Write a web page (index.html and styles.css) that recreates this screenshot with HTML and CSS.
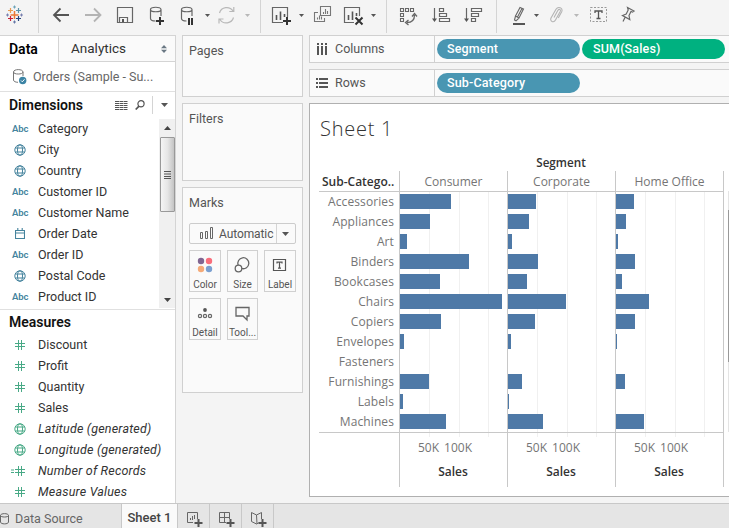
FILE: index.html
```html
<!DOCTYPE html>
<html lang="en">
<head>
<meta charset="utf-8">
<title>Workbook</title>
<link rel="stylesheet" href="styles.css">
</head>
<body>
<svg class="defs" width="0" height="0" aria-hidden="true">
  <symbol id="globe" viewBox="0 0 12 12"><g fill="none" stroke="currentColor" stroke-width="1"><circle cx="6" cy="6" r="5.2"/><ellipse cx="6" cy="6" rx="2.5" ry="5.2"/><path d="M1.3 4h9.4M1.3 8h9.4"/></g></symbol>
  <symbol id="hash" viewBox="0 0 10 10"><path d="M3.5 0v10M6.5 0v10M0 3.5h10M0 6.5h10" fill="none" stroke="currentColor" stroke-width="1"/></symbol>
  <symbol id="calendar" viewBox="0 0 10 11"><path d="M.5 2.5h9v8h-9zM.5 5h9M2.8 0v3M7.2 0v3" fill="none" stroke="currentColor" stroke-width="1.1"/></symbol>
</svg>

<header class="toolbar">
  <svg width="38" height="34" viewBox="0 0 38 34" fill="none">
    <path d="M14.5 11v8M10.5 15h8" stroke="#eb7a35" stroke-width="1.5"/>
    <path d="M10.5 8v5M8 10.5h5" stroke="#e89b51" stroke-width="1.2"/>
    <path d="M18.5 8v5M16 10.5h5" stroke="#5b93a8" stroke-width="1.2"/>
    <path d="M10.5 16v5M8 18.5h5" stroke="#c92035" stroke-width="1.2"/>
    <path d="M18.5 16v5M16 18.5h5" stroke="#26457d" stroke-width="1.2"/>
    <path d="M14.500 5.500v3M13 7h3" stroke="#6fa4b8"/>
    <path d="M14.500 20.500v3M13 22h3" stroke="#6678a8"/>
    <path d="M7.500 13.500v3M6 15h3M21.500 13.500v3M20 15h3" stroke="#7880b0"/>
  </svg>
  <i class="rule"></i>
  <svg width="71" height="34" viewBox="39 0 71 34" fill="none" stroke-width="1.8">
    <path d="M69 15H54M60.5 8.5L54 15l6.500 6.500" stroke="#555"/>
    <path d="M85 15h15M94 8.500l6.500 6.500-6.500 6.500" stroke="#b4b4b4"/>
  </svg>
  <svg width="30" height="34" viewBox="110 0 30 34" fill="none" stroke="#666">
    <path d="M117.500 7.500h15v15h-15zM119.500 22.500v-5h8v5" stroke-width="1.200"/><path d="M122 19h2v3h-2z" fill="#555" stroke="none"/>
  </svg>
  <svg width="32" height="34" viewBox="140 0 32 34" fill="none">
    <path d="M161 16V9.500c0-3-10.500-3-10.500 0v9c0 1.500 2 2.500 5 2.500M150.500 9.500c0 3 10.500 3 10.500 0" stroke="#666" stroke-width="1.200"/>
    <path d="M160 17v8M156 21h8" stroke="#333" stroke-width="2"/>
  </svg>
  <svg width="40" height="34" viewBox="172 0 40 34" fill="none">
    <path d="M192 16V9.500c0-3-10.500-3-10.500 0v9c0 1.500 2 2.500 5 2.500M181.500 9.500c0 3 10.500 3 10.500 0" stroke="#666" stroke-width="1.200"/>
    <path d="M189 18v7M192 18v7" stroke="#333" stroke-width="2"/>
    <path d="M205 14h5l-2.500 3z" fill="#555"/>
  </svg>
  <svg width="48" height="34" viewBox="212 0 48 34" fill="none" stroke="#b8b8b8" stroke-width="1.200">
    <path d="M219.500 13a7.500 7.500 0 0 1 13.500-2M233.500 17.500a7.500 7.500 0 0 1-13.500 2M233.800 7v4.500h-4.500M219 23.500V19h4.500"/>
    <path d="M245 14h5l-2.500 3z" fill="#b8b8b8" stroke="none"/>
  </svg>
  <i class="rule"></i>
  <svg width="47" height="34" viewBox="261 0 47 34" fill="none">
    <path d="M283 22.500h-10.500v-15h15V17" stroke="#666" stroke-width="1.200"/>
    <path d="M276.500 20v-5M280.500 20v-8.500M284.500 17v-3" stroke="#555" stroke-width="1.600"/>
    <path d="M287 17v8M283 21h8" stroke="#333" stroke-width="2"/><path d="M299 14h5l-2.500 3z" fill="#555"/>
  </svg>
  <svg width="31" height="34" viewBox="308 0 31 34" fill="none" stroke="#777" stroke-width="1.100">
    <path d="M320.500 6.500h10v9h-10zM318 12.500h-3.500v9h10V18M323.500 14v-2M325.500 14V9M327.500 14v-3M317.500 19.500v-2M319.500 19.500v-4M321.500 19.500v-3"/>
  </svg>
  <svg width="47" height="34" viewBox="339 0 47 34" fill="none">
    <path d="M354 22.500h-9.500v-15h15V16" stroke="#666" stroke-width="1.200"/>
    <path d="M348.500 20v-5M352.500 20v-8.500M356.500 16v-3" stroke="#555" stroke-width="1.600"/>
    <path d="M355.500 17.500l7 7M362.500 17.500l-7 7" stroke="#333" stroke-width="2"/><path d="M371 14h5l-2.500 3z" fill="#555"/>
  </svg>
  <i class="rule"></i>
  <svg width="39" height="34" viewBox="387 0 39 34" fill="none" stroke="#666" stroke-width="1.100">
    <path d="M400.500 8.500h3v3h-3zM405.500 8.500h3v3h-3zM410.500 8.500h3v3h-3zM400.500 13.500h3v3h-3zM400.500 18.500h3v3h-3z"/>
    <path d="M407 22.500c5 0 7.500-2.500 7.500-7.500M412 16.500l2.500-3 2.500 3M408.500 20l-3 2.500 3 2.500" stroke-width="1.300"/>
  </svg>
  <svg width="32" height="34" viewBox="426 0 32 34" fill="none" stroke="#666" stroke-width="1.200">
    <path d="M434.500 8v12M439.500 8.500h4v3h-4zM439.500 13.500h7v3h-7zM439.500 18.500h10v3h-10z"/><path d="M432 18.500h5l-2.500 3.500z" fill="#555" stroke="none"/>
  </svg>
  <svg width="38" height="34" viewBox="458 0 38 34" fill="none" stroke="#666" stroke-width="1.200">
    <path d="M466.500 8v12M471.500 8.500h10v3h-10zM471.500 13.500h7v3h-7zM471.500 18.500h4v3h-4z"/><path d="M464 18.500h5l-2.500 3.500z" fill="#555" stroke="none"/>
  </svg>
  <i class="rule"></i>
  <svg width="47" height="34" viewBox="497 0 47 34" fill="none" stroke="#666" stroke-width="1.100">
    <path d="M515.500 16l4.500-8.500 3.500 1.500-4.500 9zM515.500 16l-1 4 1.500.8 3-2.800M517.500 17l4.500-8.500"/>
    <path d="M513 24h12" stroke="#555" stroke-width="2"/><path d="M534 14h5l-2.500 3z" fill="#555" stroke="none"/>
  </svg>
  <svg width="42" height="34" viewBox="544 0 42 34" fill="none" stroke="#b4b4b4" stroke-width="1.100">
    <path d="M554 17.500l3.800-7c1.200-2 3.400-1 2.400 1l-4.700 8.500c-1.800 3.200-6 1.300-4.500-2l5-8.700c2-3.300 7.500-1.500 5.700 2.500l-3.400 6.200"/>
    <path d="M574 14h5l-2.500 3z" fill="#b8b8b8" stroke="none"/>
  </svg>
  <svg width="29" height="34" viewBox="586 0 29 34" fill="none" stroke="#999">
    <path d="M590.500 7.500h16v14h-16z" stroke-dasharray="2 1.500"/><path d="M595 13v-2h7v2M598.500 11v7.500M596.500 18.500h4" stroke="#555" stroke-width="1.300"/>
  </svg>
  <svg width="32" height="34" viewBox="615 0 32 34" fill="none" stroke="#666" stroke-width="1.200">
    <path d="M627.500 7.500l6.500 3.500-1.500 1-1.500-.5-2 4 .8 4-7.300-4 3.700-1.500 2-4zM625 17.500l-2 4"/>
  </svg>
</header>

<main class="workspace">
  <aside class="side">
    <div class="tabs"><b class="tab on">Data</b><span class="tab">Analytics
      <svg width="6" height="8" viewBox="0 0 6 8" fill="#6a7884"><path d="M0 3.200L3 0l3 3.200zM0 4.800L3 8l3-3.200z"/></svg></span></div>
    <div class="source">
      <svg width="14" height="16" viewBox="0 0 14 16" fill="none"><path d="M10 7V3C10-.2.500-.2.500 3v8c0 1.400 2 2.300 4.500 2.300M.500 3c0 2.700 9.500 2.700 9.500 0" stroke="#777"/><circle cx="9.700" cy="11.500" r="3.700" fill="#3c84a5"/><path d="M8 11.500l1.300 1.300 2.200-2.500" stroke="#fff"/></svg>
      <span>Orders (Sample - Su...</span>
    </div>
    <div class="section">
      <h2>Dimensions</h2>
      <svg width="13" height="9" viewBox="0 0 13 9" stroke="#555" stroke-dasharray="4 .5 3.500 .500 4"><path d="M0 .5h13M0 2.500h13M0 4.500h13M0 6.500h13M0 8.500h13"/></svg>
      <svg class="search" width="10" height="10" viewBox="0 0 10 10" fill="none" stroke="#555" stroke-width="1.200"><circle cx="6" cy="3.800" r="3.100"/><path d="M4 6.200L.7 9.500" stroke-width="1.700"/></svg>
      <i></i>
      <svg class="drop" width="7" height="4" viewBox="0 0 7 4"><path d="M0 0h7L3.500 4z" fill="#555"/></svg>
    </div>
    <div class="dims">
      <ul class="fields blue">
        <li><em>Abc</em>Category</li>
        <li><svg width="12" height="12"><use href="#globe"/></svg>City</li>
        <li><svg width="12" height="12"><use href="#globe"/></svg>Country</li>
        <li><em>Abc</em>Customer ID</li>
        <li><em>Abc</em>Customer Name</li>
        <li><svg width="10" height="11"><use href="#calendar"/></svg>Order Date</li>
        <li><em>Abc</em>Order ID</li>
        <li><svg width="12" height="12"><use href="#globe"/></svg>Postal Code</li>
        <li><em>Abc</em>Product ID</li>
      </ul>
      <div class="scroll">
        <svg width="7" height="4" viewBox="0 0 7 4"><path d="M0 4h7L3.500 0z" fill="#444"/></svg>
        <div class="thumb"><svg width="7" height="8" viewBox="0 0 7 8" stroke="#555"><path d="M0 .5h7M0 3h7M0 5.500h7M0 7.500h7"/></svg></div>
        <svg class="down" width="7" height="4" viewBox="0 0 7 4"><path d="M0 0h7L3.500 4z" fill="#444"/></svg>
      </div>
    </div>
    <div class="measures">
      <h2>Measures</h2>
      <ul class="fields green">
        <li><svg width="10" height="10"><use href="#hash"/></svg>Discount</li>
        <li><svg width="10" height="10"><use href="#hash"/></svg>Profit</li>
        <li><svg width="10" height="10"><use href="#hash"/></svg>Quantity</li>
        <li><svg width="10" height="10"><use href="#hash"/></svg>Sales</li>
        <li class="gen"><svg width="12" height="12"><use href="#globe"/></svg>Latitude (generated)</li>
        <li class="gen"><svg width="12" height="12"><use href="#globe"/></svg>Longitude (generated)</li>
        <li class="gen"><svg class="calc" width="14" height="10" viewBox="0 0 14 10"><path d="M0 4h3M0 6.500h3" stroke="currentColor"/><use href="#hash" x="4" width="10" height="10"/></svg>Number of Records</li>
        <li class="gen"><svg width="10" height="10"><use href="#hash"/></svg>Measure Values</li>
      </ul>
    </div>
  </aside>

  <div class="cards">
    <section class="card pages">Pages</section>
    <section class="card filters">Filters</section>
    <section class="card marks">Marks
      <div class="select">
        <svg width="14" height="13" viewBox="0 0 14 13" fill="none" stroke="#666"><path d="M.5 5.500h2v6h-2zM5.500 4.500h2v7h-2zM10.500 .5h2v11h-2z"/></svg>
        <span>Automatic</span><i><svg width="7" height="4" viewBox="0 0 7 4"><path d="M0 0h7L3.500 4z" fill="#555"/></svg></i>
      </div>
      <div class="buttons">
        <div><svg width="32" height="24" viewBox="0 0 32 24"><circle cx="12" cy="8" r="3.200" fill="#806591"/><circle cx="20" cy="8" r="3.200" fill="#f96d7b"/><circle cx="12" cy="16" r="3.200" fill="#f5aa78"/><circle cx="20" cy="16" r="3.200" fill="#7a9fd0"/></svg>Color</div>
        <div><svg width="31" height="24" viewBox="0 0 31 24" fill="none" stroke="#666" stroke-width="1.300"><path d="M11.200 12.200a5.500 5.500 0 1 1 3.600 3.300"/><circle cx="11.500" cy="15.500" r="3.300"/></svg>Size</div>
        <div><svg width="32" height="24" viewBox="0 0 32 24" fill="none" stroke="#555" stroke-width="1.200"><path d="M9.500 6.500h12v11h-12zM13 10.500V9.200h5v1.300M15.500 9.200v6M14 15.200h3"/></svg>Label</div>
        <div><svg width="32" height="24" viewBox="0 0 32 24" fill="none" stroke="#666" stroke-width="1.200"><circle cx="16" cy="9" r="1.900" fill="#555" stroke="none"/><circle cx="11" cy="15" r="1.600"/><circle cx="16" cy="15" r="1.600"/><circle cx="21" cy="15" r="1.600"/></svg>Detail</div>
        <div><svg width="31" height="24" viewBox="0 0 31 24" fill="none" stroke="#666" stroke-width="1.300"><path d="M9 6.500h13v8.500h-2v4l-4-4H9z"/></svg>Tool...</div>
      </div>
    </section>
  </div>

  <div class="view">
    <div class="shelf"><div class="name"><svg width="12" height="12" viewBox="0 0 12 12" stroke="#555" stroke-width="2"><path d="M2 0v2M6 0v2M10 0v2M2 3v9M6 3v9M10 3v9"/></svg>Columns</div><span class="pill">Segment</span><span class="pill sum">SUM(Sales)</span></div>
    <div class="shelf"><div class="name"><svg width="12" height="12" viewBox="0 0 12 12" stroke="#555" stroke-width="2"><path d="M0 2h2M3 2h9M0 6h2M3 6h9M0 10h2M3 10h9"/></svg>Rows</div><span class="pill">Sub-Category</span></div>
    <section class="sheet">
      <h1>Sheet 1</h1>
      <div class="dimension">Segment</div>
      <div class="chart">
        <div class="labels"><b class="head">Sub-Catego..</b>
          <span>Accessories</span><span>Appliances</span><span>Art</span><span>Binders</span><span>Bookcases</span><span>Chairs</span><span>Copiers</span><span>Envelopes</span><span>Fasteners</span><span>Furnishings</span><span>Labels</span><span>Machines</span><div class="base"></div>
        </div>
        <div class="pane"><div class="head">Consumer</div><div class="plot"><i style="width:51px"></i><i style="width:30px"></i><i style="width:7px"></i><i style="width:69px"></i><i style="width:40px"></i><i style="width:102px"></i><i style="width:41px"></i><i style="width:4px"></i><i style="width:0"></i><i style="width:29px"></i><i style="width:3px"></i><i style="width:46px"></i></div><div class="ticks"></div><div class="axis"><span>50K</span><span>100K</span></div><b>Sales</b></div>
        <div class="pane"><div class="head">Corporate</div><div class="plot"><i style="width:28px"></i><i style="width:21px"></i><i style="width:4px"></i><i style="width:30px"></i><i style="width:19px"></i><i style="width:58px"></i><i style="width:27px"></i><i style="width:3px"></i><i style="width:0"></i><i style="width:14px"></i><i style="width:1px"></i><i style="width:35px"></i></div><div class="ticks"></div><div class="axis"><span>50K</span><span>100K</span></div><b>Sales</b></div>
        <div class="pane"><div class="head">Home Office</div><div class="plot"><i style="width:18px"></i><i style="width:10px"></i><i style="width:2px"></i><i style="width:19px"></i><i style="width:6px"></i><i style="width:33px"></i><i style="width:19px"></i><i style="width:1px"></i><i style="width:0"></i><i style="width:9px"></i><i style="width:0"></i><i style="width:28px"></i></div><div class="ticks"></div><div class="axis"><span>50K</span><span>100K</span></div><b>Sales</b></div>
        <div class="vscroll"><div></div></div>
      </div>
    </section>
  </div>
</main>

<footer class="sheets">
  <div class="ds"><svg width="10" height="12" viewBox="0 0 10 12" fill="none" stroke="#666"><path d="M.5 2.500c0-2.500 8-2.500 8 0v6.500c0 2.500-8 2.500-8 0zM.5 2.500c0 2 8 2 8 0"/></svg>Data Source</div>
  <div class="current">Sheet 1</div>
  <div class="add"><svg width="16" height="15" viewBox="0 0 16 15" fill="none" stroke="#666"><path d="M6 10.500H.5V.5h10V7M3.500 8V6M5.500 8V4M7.500 7V3"/><path d="M11.500 7v8M7.500 11h8" stroke="#555" stroke-width="2"/></svg></div>
  <div class="add"><svg width="16" height="15" viewBox="0 0 16 15" fill="none" stroke="#666"><path d="M7 10.500H.5V.5h10V7M5.500.500v10M.5 5.500h10"/><path d="M11.500 7v8M7.500 11h8" stroke="#555" stroke-width="2"/></svg></div>
  <div class="add"><svg width="16" height="15" viewBox="0 0 16 15" fill="none" stroke="#666"><path d="M6 12L5.500 3 .5.500v9l5 2.500 2-1M5.500 3l5-2.500V7"/><path d="M11.500 7v8M7.500 11h8" stroke="#555" stroke-width="2"/></svg></div>
</footer>
</body>
</html>
```
FILE: styles.css
```css
* { box-sizing: border-box; }
body { margin: 0; width: 729px; height: 528px; overflow: hidden; display: flex; flex-direction: column; background: #f4f4f4; color: #555; font: 12.5px/20px Roboto, "Liberation Sans", sans-serif; }
svg { display: block; flex: none; }
.defs { position: absolute; }
i, em { font-style: normal; }
h1, h2 { margin: 0; }

.toolbar { height: 35px; display: flex; flex: none; }
.rule { width: 1px; height: 33px; background: #d4d4d4; }

.workspace { height: 468px; flex: none; display: flex; }

.side { width: 176px; background: #fff; border: solid #d4d4d4; border-width: 1px 1px 0 0; color: #333; }
.tabs { display: flex; height: 26px; font-size: 13.5px; line-height: 25px; }
.tab { width: 117px; display: flex; align-items: center; justify-content: space-between; padding: 0 8px 0 12px; background: #fafafa; border: solid #d4d4d4; border-width: 0 0 1px 1px; }
.tab.on { width: 58px; padding: 0 0 0 9px; background: #fff; border: 0; color: #000; font-size: 14px; font-weight: 600; }
.source { height: 30px; display: flex; align-items: center; gap: 6px; padding-left: 13px; border-bottom: 1px solid #e0e0e0; color: #666; }
h2 { font-size: 14px; line-height: 20px; font-weight: 600; color: #111; }
.section { height: 26px; display: flex; align-items: center; padding-left: 9px; }
.section h2 { width: 106px; }
.section .search { margin-left: 7px; }
.section i { width: 1px; height: 18px; margin-left: 7px; background: #d4d4d4; }
.section .drop { margin-left: 8px; }
.dims { height: 192px; display: flex; justify-content: space-between; border-bottom: 1px solid #e0e0e0; }
.fields { margin: 0; padding: 0; list-style: none; }
.fields li { height: 21px; display: flex; align-items: center; white-space: nowrap; }
.fields em { width: 26px; margin-left: 12px; padding-top: 1px; font-size: 9.500px; font-weight: 600; letter-spacing: -.1px; color: #45839d; }
.fields svg { margin: 0 12px 0 14px; }
.fields svg[width="10"] { margin: 0 13px 0 15px; }
.fields svg.calc { margin: 0 13px 0 11px; }
.blue svg { color: #45839d; }
.green svg { color: #48a986; }
.fields .gen { font-style: italic; letter-spacing: .2px; }
.scroll { width: 16px; height: 189px; margin-top: 1px; background: #f0f0f0; display: flex; flex-direction: column; align-items: center; padding-top: 7px; }
.thumb { width: 15px; height: 75px; margin-top: 7px; display: flex; align-items: center; justify-content: center; border: 1px solid #999; border-radius: 1px; background: linear-gradient(90deg, #f5f5f5, #e6e6e6 50%, #c4c4c4); }
.scroll .down { margin-top: auto; margin-bottom: 6px; }
.measures { padding-top: 2px; }
.measures h2 { padding-left: 9px; margin-bottom: 2px; }

.cards { width: 121px; margin-left: 6px; display: flex; flex-direction: column; gap: 6px; }
.card { background: #fafafa; border: 1px solid #d0d0d0; padding: 5px 6px; }
.pages { height: 62px; }
.filters { height: 78px; }
.marks { height: 206px; }
.select { height: 21px; display: flex; align-items: center; margin-top: 10px; padding-left: 10px; border: 1px solid #ccc; border-radius: 2px; }
.select span { flex: 1; padding-left: 5px; font-size: 12px; letter-spacing: -.1px; }
.select i { width: 19px; height: 19px; padding: 8px 0 0 5px; border-left: 1px solid #d4d4d4; }
.buttons { display: grid; grid-template-columns: 32px 31px 32px; column-gap: 6px; row-gap: 6px; margin-top: 6px; }
.buttons div { height: 42px; border: 1px solid #d0d0d0; font-size: 10px; line-height: 18px; text-align: center; }
.buttons svg { margin: 2px 0 -1px -1px; }

.view { flex: 1; margin-left: 6px; display: flex; flex-direction: column; gap: 6px; min-width: 0; }
.shelf { height: 28px; flex: none; display: flex; align-items: center; background: #fafafa; border: solid #d0d0d0; border-width: 1px 0 1px 1px; }
.name { width: 125px; height: 26px; display: flex; align-items: center; gap: 7px; padding-left: 6px; border-right: 1px solid #d0d0d0; margin-right: 2px; }
.pill { width: 143px; height: 20px; border-radius: 10px; padding-left: 10px; margin-right: 2px; background: #4996b2; color: #fff; font-weight: 500; letter-spacing: .15px; }
.sum { background: #00b180; padding-left: 11px; }

.sheet { height: 394px; background: #fff; border: solid #b0b0b0; border-width: 1px 0 1px 1px; padding-left: 9px; font: 12px/20px "Open Sans", sans-serif; color: #757575; }
h1 { font: 300 20px/30px "Open Sans", sans-serif; letter-spacing: .75px; color: #333; padding: 10px 0 0 1px; }
.dimension { width: 324px; margin: 8px 0 0 80px; height: 19px; text-align: center; font-size: 11.700px; font-weight: 600; color: #333; line-height: 21px; }
.chart { display: flex; }
.chart b { color: #333; font-weight: 600; }
.head { height: 21px; line-height: 22px; border-bottom: 1px solid #c8c8c8; text-align: center; }
.labels { width: 80px; display: flex; flex-direction: column; }
.labels span { text-align: right; padding-right: 5px; letter-spacing: .1px; }
.labels .head { text-align: left; padding-left: 3px; white-space: nowrap; }
.base { border-top: 1px solid #c8c8c8; }
.pane { width: 108px; height: 316px; border-left: 1px solid #c8c8c8; }
.pane:nth-child(4) { width: 109px; border-right: 1px solid #c8c8c8; }
.plot, .ticks { background: linear-gradient(#f0f0f0, #f0f0f0) 29px 0 / 1px 100% no-repeat, linear-gradient(#f0f0f0, #f0f0f0) 59px 0 / 1px 100% no-repeat, linear-gradient(#f0f0f0, #f0f0f0) 88px 0 / 1px 100% no-repeat; }
.plot { height: 240px; display: flex; flex-direction: column; gap: 5px; padding-top: 2px; }
.plot i { height: 15px; flex: none; background: #4e79a7; }
.ticks { height: 5px; border-top: 1px solid #c8c8c8; }
.axis { display: flex; gap: 5px; padding: 1px 0 0 18px; height: 25px; }
.pane b { display: block; text-align: center; line-height: 20px; padding-right: 1px; }
.vscroll { width: 1px; height: 241px; margin: 20px 0 0 4px; padding-top: 19px; background: #e4e4e4; }
.vscroll div { height: 152px; background: #999; }

.sheets { height: 25px; flex: none; display: flex; background: #e5e5e5; border-top: 1px solid #c8c8c8; line-height: 20px; color: #666; }
.ds { width: 121px; display: flex; align-items: center; gap: 5px; padding-top: 5px; }
.current { width: 57px; background: #fafafa; border: solid #c8c8c8; border-width: 0 1px; color: #444; font-size: 13px; font-weight: 500; text-align: center; line-height: 28px; white-space: nowrap; }
.add { width: 32px; border-right: 1px solid #c8c8c8; padding: 8px 0 0 9px; }
```
